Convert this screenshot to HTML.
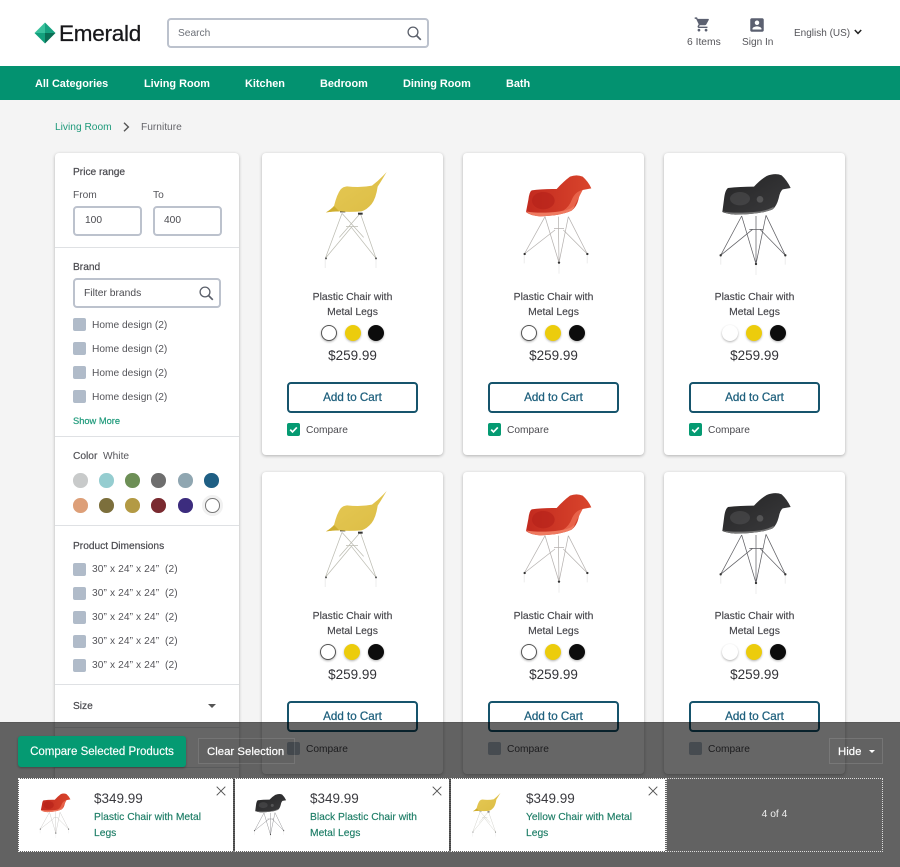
<!DOCTYPE html>
<html><head><meta charset="utf-8"><title>Emerald</title>
<style>
*{box-sizing:border-box}
html,body{margin:0;padding:0}
body{width:900px;height:867px;position:relative;overflow:hidden;background:#f4f4f4;font-family:"Liberation Sans",sans-serif;color:#4a4a4f}
.t{position:absolute;white-space:nowrap;line-height:14px;margin-top:2px}
.m{-webkit-text-stroke:.2px currentColor}
.a{position:absolute}
.card{position:absolute;width:181px;height:302px;background:#fff;border-radius:4px;box-shadow:0 1px 3px rgba(0,0,0,.28)}
.chair{filter:blur(.35px)}
.name{position:absolute;left:0;right:0;top:136px;text-align:center;font-size:10.4px;line-height:15px;padding-top:1px;color:#46464b;-webkit-text-stroke:.15px #46464b}
.s{position:absolute;top:172px;width:16px;height:16px;border-radius:50%;box-shadow:0 1px 2px rgba(0,0,0,.3)}
.price{position:absolute;left:0;right:0;top:195px;text-align:center;font-size:13.5px;line-height:16px;color:#333338}
.atc{position:absolute;left:25px;top:229px;width:131px;height:31px;border:2px solid #16546c;border-radius:4px;color:#1d5f7c;text-align:center;font-size:11.6px;line-height:28px;-webkit-text-stroke:.25px #1d5f7c}
.cb{position:absolute;left:25px;top:270px;width:13px;height:13px;background:#059a72;border-radius:2px}
.cmp{position:absolute;left:44px;top:271px;font-size:10.2px;line-height:13px;color:#4a4a4f}
.nav{position:absolute;top:77px;margin-top:0;color:#fff;font-size:10.9px;line-height:14px;font-weight:bold;white-space:nowrap;padding-top:0}
.sq{position:absolute;left:73px;width:13px;height:13px;background:#b0bbc9;border-radius:2px}
.lbl{position:absolute;left:92px;font-size:10.2px;line-height:13px;color:#55555a;white-space:nowrap;margin-top:1px}
.dot{position:absolute;width:14.5px;height:14.5px;border-radius:50%}
.hr{position:absolute;left:0;width:184px;height:1px;background:#dfe1e4}
.inp{position:absolute;border:2px solid #bcc2cd;border-radius:4px;background:#fff}
.ci{position:absolute;top:778px;width:216px;height:74px;background:#fff;background-clip:padding-box;border:1px dotted #f4f4f4;border-left-color:#444;border-right-color:#444}
.pr{position:absolute;left:75px;top:12px;font-size:13.5px;line-height:16px;color:#3a3a3f}
.nm{position:absolute;left:75px;top:31px;font-size:10.3px;line-height:15.5px;color:#1d7d66;-webkit-text-stroke:.15px #1d7d66;white-space:nowrap}
.x{position:absolute;left:197px;top:7px}
</style></head><body>
<svg width="0" height="0" style="position:absolute">
<defs>
<linearGradient id="yg" x1="0" y1="0" x2="1" y2="1"><stop offset="0" stop-color="#e6c955"/><stop offset="1" stop-color="#dcbd45"/></linearGradient>
<linearGradient id="rg" x1="0" y1="0" x2="1" y2="0"><stop offset="0" stop-color="#c22a1f"/><stop offset="1" stop-color="#d9452c"/></linearGradient>
<linearGradient id="bg" x1="0" y1="0" x2="1" y2="1"><stop offset="0" stop-color="#242425"/><stop offset="1" stop-color="#3c3c3e"/></linearGradient>
<symbol id="yellow" viewBox="0 0 570 390">
<g fill="none" stroke="#bcbcb2" stroke-width="2.2">
<path d="M240 190L190 325M295 190L342 325M240 190L305 262M295 190L232 262M190 325L268 232L342 325M252 230H288"/>
</g>
<path d="M190 328v26M342 328v26" stroke="#f1f1f1" stroke-width="4"/>
<circle cx="192" cy="325" r="3" fill="#555"/><circle cx="342" cy="325" r="3" fill="#555"/>
<rect x="234" y="181" width="16" height="6" fill="#333"/><rect x="288" y="188" width="14" height="6" fill="#333"/>
<path d="M192 187Q208 178 216 168Q225 132 236 118Q243 110 255 109Q295 114 330 107Q352 90 374 66Q360 90 347 110Q342 145 329 162Q314 180 298 184Q262 187 232 184Q210 184 192 187Z" fill="url(#yg)"/>
<path d="M192 187Q210 184 232 184L216 168Q208 178 192 187Z" fill="#cfae2f"/>
</symbol>
<symbol id="red" viewBox="0 0 570 390">
<g fill="none" stroke="#b5b1af" stroke-width="2.2">
<path d="M255 200L193 312M325 200L382 312M255 200L297 338M325 200L297 338M295 200L297 338M282 236H312M193 312L285 240M382 312L310 240"/>
</g>
<path d="M193 315v25M382 315v25M297 341v30" stroke="#f1f1f1" stroke-width="4"/>
<circle cx="194" cy="312" r="3.5" fill="#333"/><circle cx="382" cy="312" r="3.5" fill="#333"/><circle cx="297" cy="338" r="3.5" fill="#333"/>
<path d="M198 186L205 150Q208 125 215 121Q250 116 290 117Q310 95 330 80Q350 72 368 80Q385 95 394 115L368 120Q360 125 355 150Q350 170 335 182Q300 198 240 199Q210 197 198 186Z" fill="url(#rg)"/>
<path d="M198 184Q240 192 300 184Q325 180 345 165Q342 175 335 182Q300 198 240 199Q210 197 198 184Z" fill="#ef7a60"/>
<path d="M368 120Q345 125 335 150Q328 170 310 182Q335 178 345 165Q355 145 368 120Z" fill="#e8634a"/>
<ellipse cx="250" cy="152" rx="34" ry="26" fill="#b5221a" opacity=".65"/>
</symbol>
<symbol id="black" viewBox="0 0 570 390">
<g fill="none" stroke="#5f5f64" stroke-width="2.2">
<path d="M245 198L182 316M318 196L376 316M245 198L288 342M318 196L288 342M288 198L288 342M268 238H310M182 316L278 238M376 316L300 238"/>
</g>
<path d="M182 319v25M376 319v25M288 345v30" stroke="#f1f1f1" stroke-width="4"/>
<circle cx="182" cy="316" r="3.5" fill="#333"/><circle cx="376" cy="316" r="3.5" fill="#333"/><circle cx="288" cy="342" r="3.5" fill="#333"/>
<path d="M187 186L192 148Q195 120 204 114Q240 110 282 110Q300 90 320 78Q345 68 365 76Q382 92 392 114L368 118Q360 124 356 145Q350 168 338 178Q300 194 225 194Q200 192 187 186Z" fill="url(#bg)"/>
<path d="M188 184Q225 192 300 184Q325 180 342 170Q340 176 338 178Q300 194 225 194Q200 192 188 184Z" fill="#777"/>
<ellipse cx="240" cy="146" rx="30" ry="20" fill="#4e4e50" opacity=".6"/>
<ellipse cx="300" cy="148" rx="10" ry="10" fill="#6a6a6c" opacity=".6"/>
</symbol>
<symbol id="chk" viewBox="0 0 13 13"><path d="M3.2 6.6L5.5 8.9L9.8 4.4" fill="none" stroke="#fff" stroke-width="1.7"/></symbol>
<symbol id="close" viewBox="0 0 10 10"><path d="M.7.7L9.3 9.3M9.3.7L.7 9.3" fill="none" stroke="#555" stroke-width="1"/></symbol>
<symbol id="mag" viewBox="0 0 18 18"><circle cx="7" cy="7" r="4.9" fill="none" stroke="#5a5f6a" stroke-width="1.3"/><path d="M10.6 10.6L14.8 14.8" stroke="#5a5f6a" stroke-width="1.7" fill="none"/></symbol>
</defs>
</svg>

<!-- header -->
<div class="a" style="left:0;top:0;width:900px;height:66px;background:#fff"></div>
<svg class="a" style="left:34px;top:22px" width="22" height="22" viewBox="0 0 22 22">
<path d="M11 0.5L21.5 11H11Z" fill="#17a280"/><path d="M11 0.5L0.5 11H11Z" fill="#38c19c"/><path d="M0.5 11L11 21.5V11Z" fill="#12a07c"/><path d="M21.5 11L11 21.5V11Z" fill="#0a6f55"/></svg>
<div class="t" style="left:59px;top:19px;font-size:22.5px;line-height:26px;color:#17171a;-webkit-text-stroke:.25px #17171a;letter-spacing:-.25px">Emerald</div>
<div class="inp" style="left:167px;top:18px;width:262px;height:30px"></div>
<div class="t" style="left:178px;top:25px;font-size:10.2px;color:#6c7078">Search</div>
<svg class="a" style="left:406px;top:25px" width="18" height="18"><use href="#mag"/></svg>
<svg class="a" style="left:694px;top:16px" width="17" height="17" viewBox="0 0 24 24"><path fill="#5b6070" d="M7 18c-1.1 0-1.99.9-1.99 2S5.9 22 7 22s2-.9 2-2-.9-2-2-2zM1 2v2h2l3.6 7.59-1.35 2.45c-.16.28-.25.61-.25.96 0 1.1.9 2 2 2h12v-2H7.42c-.14 0-.25-.11-.25-.25l.03-.12.9-1.63h7.45c.75 0 1.41-.41 1.75-1.03l3.58-6.49c.08-.14.12-.31.12-.48 0-.55-.45-1-1-1H5.21l-.94-2H1zm16 16c-1.1 0-1.99.9-1.99 2s.89 2 1.99 2 2-.9 2-2-.9-2-2-2z"/></svg>
<svg class="a" style="left:748px;top:16px" width="18" height="18" viewBox="0 0 24 24"><path fill="#5b6070" d="M3 5v14c0 1.1.89 2 2 2h14c1.1 0 2-.9 2-2V5c0-1.1-.9-2-2-2H5c-1.11 0-2 .9-2 2zm12 4c0 1.66-1.34 3-3 3s-3-1.34-3-3 1.34-3 3-3 3 1.34 3 3zm-9 8c0-2 4-3.1 6-3.1s6 1.1 6 3.1v1H6v-1z"/></svg>
<div class="t" style="left:687px;top:34px;font-size:10.3px;color:#55555a">6 Items</div>
<div class="t" style="left:742px;top:34px;font-size:10.1px;color:#55555a">Sign In</div>
<div class="t" style="left:794px;top:25px;font-size:10px;color:#55555a">English (US)</div>
<svg class="a" style="left:854px;top:29px" width="8" height="6" viewBox="0 0 8 6"><path d="M.8 1L4 4.4L7.2 1" fill="none" stroke="#222" stroke-width="1.5"/></svg>

<!-- nav -->
<div class="a" style="left:0;top:66px;width:900px;height:34px;background:#039270"></div>
<div class="nav" style="left:35px">All Categories</div>
<div class="nav" style="left:144px">Living Room</div>
<div class="nav" style="left:245px">Kitchen</div>
<div class="nav" style="left:320px">Bedroom</div>
<div class="nav" style="left:403px">Dining Room</div>
<div class="nav" style="left:506px">Bath</div>

<!-- breadcrumb -->
<div class="t" style="left:55px;top:119px;font-size:10.2px;color:#1f9a7b">Living Room</div>
<svg class="a" style="left:123px;top:122px" width="7" height="10" viewBox="0 0 7 10"><path d="M1 .8L5.4 5L1 9.2" fill="none" stroke="#555" stroke-width="1.4"/></svg>
<div class="t" style="left:141px;top:119px;font-size:10.2px;color:#66666b">Furniture</div>

<!-- sidebar -->
<div class="a" style="left:55px;top:153px;width:184px;height:640px;background:#fff;border-radius:4px;box-shadow:0 1px 3px rgba(0,0,0,.28)">
<div class="hr" style="top:94px"></div>
<div class="hr" style="top:283px"></div>
<div class="hr" style="top:372px"></div>
<div class="hr" style="top:531px"></div>
<div class="hr" style="top:574px"></div>
<div class="hr" style="top:614px"></div>
</div>
<div class="t m" style="left:73px;top:164px;font-size:10.2px;color:#4a4a4f">Price range</div>
<div class="t" style="left:73px;top:187px;font-size:10.2px;color:#55555a">From</div>
<div class="t" style="left:153px;top:187px;font-size:10.2px;color:#55555a">To</div>
<div class="inp" style="left:73px;top:206px;width:69px;height:30px"></div>
<div class="inp" style="left:153px;top:206px;width:69px;height:30px"></div>
<div class="t" style="left:85px;top:212px;font-size:10.2px;color:#4a4a4f">100</div>
<div class="t" style="left:164px;top:212px;font-size:10.2px;color:#4a4a4f">400</div>
<div class="t m" style="left:73px;top:259px;font-size:10.2px;color:#4a4a4f">Brand</div>
<div class="inp" style="left:73px;top:278px;width:148px;height:30px"></div>
<div class="t" style="left:84px;top:285px;font-size:10.3px;color:#4a4a4f">Filter brands</div>
<svg class="a" style="left:198px;top:285px" width="18" height="18"><use href="#mag"/></svg>
<div class="sq" style="top:318px"></div><div class="lbl" style="top:318px">Home design (2)</div>
<div class="sq" style="top:342px"></div><div class="lbl" style="top:342px">Home design (2)</div>
<div class="sq" style="top:366px"></div><div class="lbl" style="top:366px">Home design (2)</div>
<div class="sq" style="top:390px"></div><div class="lbl" style="top:390px">Home design (2)</div>
<div class="t m" style="left:73px;top:412px;font-size:9.3px;color:#1f9a7b">Show More</div>
<div class="t" style="left:73px;top:448px;font-size:10.2px;color:#55555a"><span class="m">Color</span>&nbsp;&nbsp;White</div>
<div class="dot" style="left:73px;top:473px;background:#c8caca"></div>
<div class="dot" style="left:99px;top:473px;background:#95cdd0"></div>
<div class="dot" style="left:125px;top:473px;background:#6d8f56"></div>
<div class="dot" style="left:151px;top:473px;background:#6e6e6e"></div>
<div class="dot" style="left:178px;top:473px;background:#8fa6b1"></div>
<div class="dot" style="left:204px;top:473px;background:#1f5f84"></div>
<div class="dot" style="left:73px;top:498px;background:#dd9f78"></div>
<div class="dot" style="left:99px;top:498px;background:#7c6f3c"></div>
<div class="dot" style="left:125px;top:498px;background:#b39a44"></div>
<div class="dot" style="left:151px;top:498px;background:#7a2a30"></div>
<div class="dot" style="left:178px;top:498px;background:#3c2c7e"></div>
<div class="dot" style="left:205px;top:498px;background:#fff;border:1px solid #777;box-shadow:0 0 0 3px #f1f1f1"></div>
<div class="t m" style="left:73px;top:538px;font-size:10.2px;color:#4a4a4f">Product Dimensions</div>
<div class="sq" style="top:563px"></div><div class="lbl" style="top:562px;letter-spacing:.1px">30” x 24” x 24”&nbsp; (2)</div>
<div class="sq" style="top:587px"></div><div class="lbl" style="top:586px;letter-spacing:.1px">30” x 24” x 24”&nbsp; (2)</div>
<div class="sq" style="top:611px"></div><div class="lbl" style="top:610px;letter-spacing:.1px">30” x 24” x 24”&nbsp; (2)</div>
<div class="sq" style="top:635px"></div><div class="lbl" style="top:634px;letter-spacing:.1px">30” x 24” x 24”&nbsp; (2)</div>
<div class="sq" style="top:659px"></div><div class="lbl" style="top:658px;letter-spacing:.1px">30” x 24” x 24”&nbsp; (2)</div>
<div class="t m" style="left:73px;top:698px;font-size:10.2px;color:#4a4a4f">Size</div>
<div class="a" style="left:208px;top:704px;border-left:4px solid transparent;border-right:4px solid transparent;border-top:4px solid #555"></div>

<!-- cards row 1 -->
<div class="card" style="left:262px;top:153px">
<svg class="a chair" style="left:0;top:-3px" width="190" height="130"><use href="#yellow"/></svg>
<div class="name">Plastic Chair with<br>Metal Legs</div>
<div class="s" style="left:59px;background:#fff;border:1.5px solid #555"></div><div class="s" style="left:83px;background:#eccc0c"></div><div class="s" style="left:106px;background:#0c0c0c"></div>
<div class="price">$259.99</div><div class="atc">Add to Cart</div>
<div class="cb"><svg width="13" height="13"><use href="#chk"/></svg></div><div class="cmp">Compare</div>
</div>
<div class="card" style="left:463px;top:153px">
<svg class="a chair" style="left:-3px;top:-3px" width="190" height="130"><use href="#red"/></svg>
<div class="name">Plastic Chair with<br>Metal Legs</div>
<div class="s" style="left:58px;background:#fff;border:1.5px solid #555"></div><div class="s" style="left:82px;background:#eccc0c"></div><div class="s" style="left:106px;background:#0c0c0c"></div>
<div class="price">$259.99</div><div class="atc">Add to Cart</div>
<div class="cb"><svg width="13" height="13"><use href="#chk"/></svg></div><div class="cmp">Compare</div>
</div>
<div class="card" style="left:664px;top:153px">
<svg class="a chair" style="left:-4px;top:-3px" width="190" height="130"><use href="#black"/></svg>
<div class="name">Plastic Chair with<br>Metal Legs</div>
<div class="s" style="left:58px;background:#fff"></div><div class="s" style="left:82px;background:#eccc0c"></div><div class="s" style="left:106px;background:#0c0c0c"></div>
<div class="price">$259.99</div><div class="atc">Add to Cart</div>
<div class="cb"><svg width="13" height="13"><use href="#chk"/></svg></div><div class="cmp">Compare</div>
</div>
<!-- cards row 2 -->
<div class="card" style="left:262px;top:472px">
<svg class="a chair" style="left:0;top:-3px" width="190" height="130"><use href="#yellow"/></svg>
<div class="name">Plastic Chair with<br>Metal Legs</div>
<div class="s" style="left:58px;background:#fff;border:1.5px solid #555"></div><div class="s" style="left:82px;background:#eccc0c"></div><div class="s" style="left:106px;background:#0c0c0c"></div>
<div class="price">$259.99</div><div class="atc">Add to Cart</div>
<div class="cb" style="background:#b0bbc9"></div><div class="cmp">Compare</div>
</div>
<div class="card" style="left:463px;top:472px">
<svg class="a chair" style="left:-3px;top:-3px" width="190" height="130"><use href="#red"/></svg>
<div class="name">Plastic Chair with<br>Metal Legs</div>
<div class="s" style="left:58px;background:#fff;border:1.5px solid #555"></div><div class="s" style="left:82px;background:#eccc0c"></div><div class="s" style="left:106px;background:#0c0c0c"></div>
<div class="price">$259.99</div><div class="atc">Add to Cart</div>
<div class="cb" style="background:#b0bbc9"></div><div class="cmp">Compare</div>
</div>
<div class="card" style="left:664px;top:472px">
<svg class="a chair" style="left:-4px;top:-3px" width="190" height="130"><use href="#black"/></svg>
<div class="name">Plastic Chair with<br>Metal Legs</div>
<div class="s" style="left:58px;background:#fff"></div><div class="s" style="left:82px;background:#eccc0c"></div><div class="s" style="left:106px;background:#0c0c0c"></div>
<div class="price">$259.99</div><div class="atc">Add to Cart</div>
<div class="cb" style="background:#b0bbc9"></div><div class="cmp">Compare</div>
</div>

<!-- compare overlay -->
<div class="a" style="left:0;top:722px;width:900px;height:145px;background:rgba(0,0,0,.6);border-top:1px solid rgba(0,0,0,.1)"></div>
<div class="a" style="left:18px;top:736px;width:168px;height:31px;background:#059a72;border-radius:3px;box-shadow:0 1px 2px rgba(0,0,0,.3);color:#fff;font-size:11.5px;line-height:32px;text-align:center;-webkit-text-stroke:.15px #fff">Compare Selected Products</div>
<div class="a" style="left:198px;top:738px;width:97px;height:26px;border:1px solid rgba(255,255,255,.12);background:rgba(0,0,0,.03)"></div>
<div class="t m" style="left:207px;top:743px;font-size:11.4px;color:#fff">Clear Selection</div>
<div class="a" style="left:829px;top:738px;width:54px;height:26px;border:1px solid rgba(255,255,255,.12)"></div>
<div class="t m" style="left:838px;top:743px;font-size:11.4px;color:#fff">Hide</div>
<div class="a" style="left:869px;top:750px;border-left:3.5px solid transparent;border-right:3.5px solid transparent;border-top:3.5px solid #fff"></div>

<div class="ci" style="left:18px;border-left-color:#f4f4f4">
<svg class="a chair" style="left:-8px;top:3px" width="86" height="59"><use href="#red"/></svg>
<div class="pr">$349.99</div><div class="nm">Plastic Chair with Metal<br>Legs</div>
<svg class="x" width="10" height="10"><use href="#close"/></svg>
</div>
<div class="ci" style="left:234px">
<svg class="a chair" style="left:-8px;top:4px" width="86" height="59"><use href="#black"/></svg>
<div class="pr">$349.99</div><div class="nm">Black Plastic Chair with<br>Metal Legs</div>
<svg class="x" width="10" height="10"><use href="#close"/></svg>
</div>
<div class="ci" style="left:450px;border-right-color:#f4f4f4">
<svg class="a chair" style="left:-7px;top:4px" width="86" height="59"><use href="#yellow"/></svg>
<div class="pr">$349.99</div><div class="nm">Yellow Chair with Metal<br>Legs</div>
<svg class="x" width="10" height="10"><use href="#close"/></svg>
</div>
<div class="a" style="left:666px;top:778px;width:217px;height:74px;border:1px dotted #ddd;color:#eee;text-align:center;font-size:10.3px;line-height:72px">4 of 4</div>
</body></html>
